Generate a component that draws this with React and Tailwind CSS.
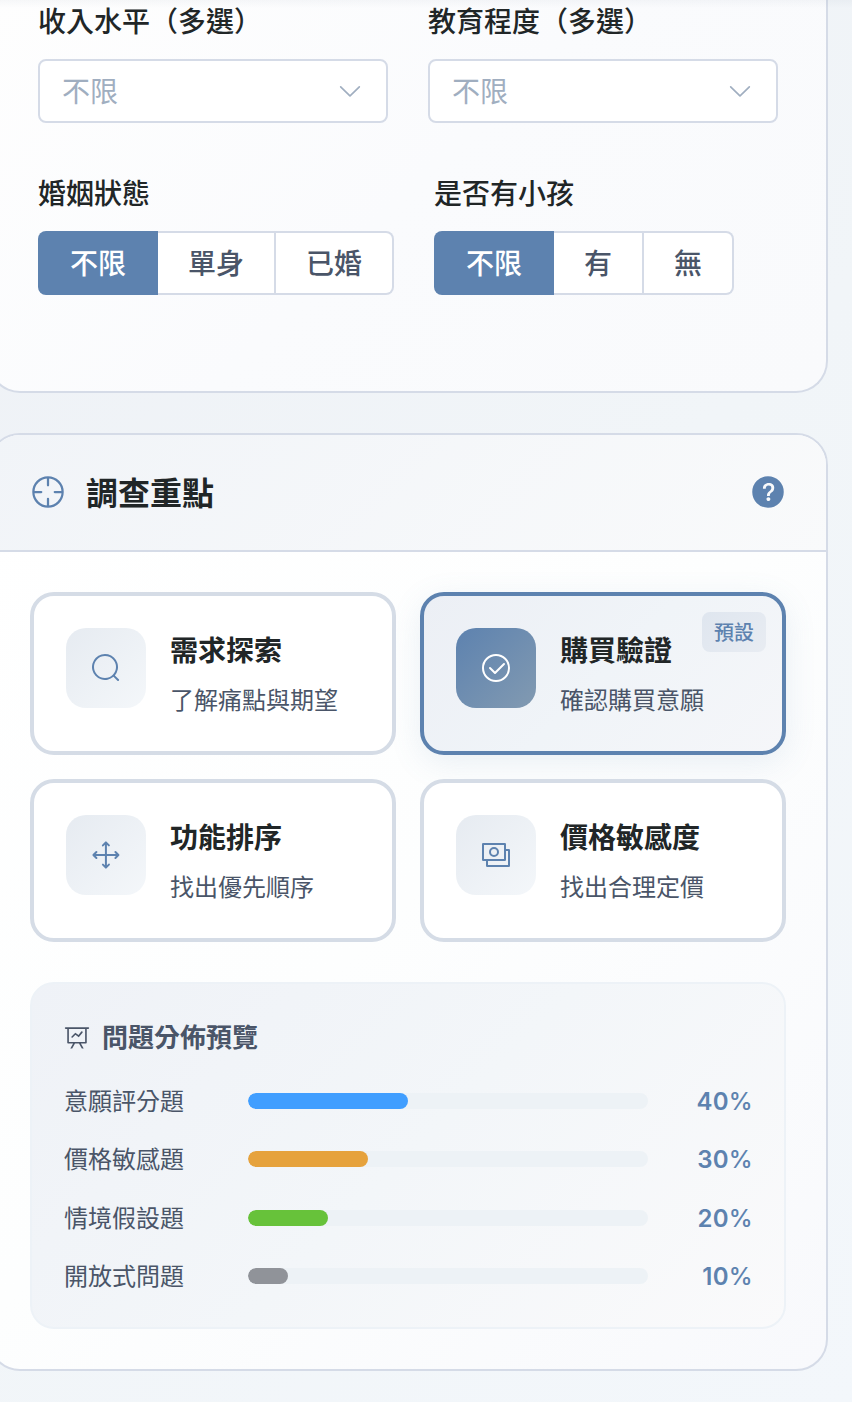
import React from "react";

const ICONS = {
  search: [
    "m795.904 750.72 124.992 124.928a32 32 0 0 1-45.248 45.248L750.656 795.904a416 416 0 1 1 45.248-45.184zM480 832a352 352 0 1 0 0-704 352 352 0 0 0 0 704z",
  ],
  check: [
    "M512 896a384 384 0 1 0 0-768 384 384 0 0 0 0 768zm0 64a448 448 0 1 1 0-896 448 448 0 0 1 0 896z",
    "M745.344 361.344a32 32 0 0 1 45.312 45.312l-288 288a32 32 0 0 1-45.312 0l-160-160a32 32 0 1 1 45.312-45.312L480 626.752l265.344-265.408z",
  ],
  aim: [
    "M512 896a384 384 0 1 0 0-768 384 384 0 0 0 0 768zm0 64a448 448 0 1 1 0-896 448 448 0 0 1 0 896z",
    "M512 96a32 32 0 0 1 32 32v192a32 32 0 0 1-64 0V128a32 32 0 0 1 32-32zm0 576a32 32 0 0 1 32 32v192a32 32 0 1 1-64 0V704a32 32 0 0 1 32-32zM96 512a32 32 0 0 1 32-32h192a32 32 0 0 1 0 64H128a32 32 0 0 1-32-32zm576 0a32 32 0 0 1 32-32h192a32 32 0 1 1 0 64H704a32 32 0 0 1-32-32z",
  ],
  question: [
    "M512 64a448 448 0 1 1 0 896 448 448 0 0 1 0-896zm23.744 191.488c-52.096 0-92.928 14.784-123.2 44.352-30.976 29.568-45.76 70.4-45.76 122.496h80.256c0-29.568 5.632-52.8 17.6-68.992 13.376-19.712 35.2-28.864 66.176-28.864 23.936 0 42.944 6.336 56.32 19.712 12.672 13.376 19.712 31.68 19.712 54.912 0 17.6-6.336 34.496-19.008 49.984l-8.448 9.856c-45.76 40.832-73.216 70.4-82.368 89.408-9.856 19.008-14.08 42.24-14.08 68.992v9.856h80.96v-9.856c0-16.896 3.52-31.68 10.56-45.76 6.336-12.672 15.488-24.64 28.16-35.2 33.792-29.568 54.208-48.576 60.544-55.616 16.896-22.528 26.048-51.392 26.048-86.592 0-42.944-14.08-76.736-42.24-101.376-28.16-25.344-65.472-37.312-111.232-37.312zm-12.672 406.208a54.272 54.272 0 0 0-38.72 14.784 49.408 49.408 0 0 0-15.488 38.016c0 15.488 4.928 28.16 15.488 38.016A54.848 54.848 0 0 0 523.072 768c15.488 0 28.16-4.928 38.72-14.784a51.52 51.52 0 0 0 16.192-38.72 51.968 51.968 0 0 0-15.488-38.016 55.936 55.936 0 0 0-39.424-14.784z",
  ],
  rank: [
    "m186.496 544 41.408 41.344a32 32 0 1 1-45.248 45.312l-96-96a32 32 0 0 1 0-45.312l96-96a32 32 0 1 1 45.248 45.312L186.496 480h290.816V186.432l-41.472 41.472a32 32 0 1 1-45.248-45.184l96-96.128a32 32 0 0 1 45.312 0l96 96.064a32 32 0 0 1-45.248 45.184l-41.344-41.28V480H832l-41.344-41.344a32 32 0 0 1 45.248-45.312l96 96a32 32 0 0 1 0 45.312l-96 96a32 32 0 0 1-45.248-45.312L832 544H541.312v293.44l41.344-41.28a32 32 0 1 1 45.248 45.248l-96 96a32 32 0 0 1-45.312 0l-96-96a32 32 0 1 1 45.312-45.248l41.408 41.408V544H186.496z",
  ],
  money: [
    "M256 640v192h640V384H768v-64h150.976c14.272 0 19.456 1.472 24.64 4.288a29.056 29.056 0 0 1 12.16 12.096c2.752 5.184 4.224 10.368 4.224 24.64v493.952c0 14.272-1.472 19.456-4.288 24.64a29.056 29.056 0 0 1-12.096 12.16c-5.184 2.752-10.368 4.224-24.64 4.224H233.024c-14.272 0-19.456-1.472-24.64-4.288a29.056 29.056 0 0 1-12.16-12.096c-2.688-5.184-4.224-10.368-4.224-24.576V640h64z",
    "M768 192H128v448h640V192zm64-22.976v493.952c0 14.272-1.472 19.456-4.288 24.64a29.056 29.056 0 0 1-12.096 12.16c-5.184 2.752-10.368 4.224-24.64 4.224H105.024c-14.272 0-19.456-1.472-24.64-4.288a29.056 29.056 0 0 1-12.16-12.096C65.536 682.432 64 677.248 64 663.04V169.024c0-14.272 1.472-19.456 4.288-24.64a29.056 29.056 0 0 1 12.096-12.16C85.568 129.536 90.752 128 104.96 128h685.952c14.272 0 19.456 1.472 24.64 4.288a29.056 29.056 0 0 1 12.16 12.096c2.752 5.184 4.224 10.368 4.224 24.64z",
    "M448 576a160 160 0 1 1 0-320 160 160 0 0 1 0 320zm0-64a96 96 0 1 0 0-192 96 96 0 0 0 0 192z",
  ],
  dataLine: [
    "M359.168 768H160a32 32 0 0 1-32-32V192H64a32 32 0 0 1 0-64h896a32 32 0 1 1 0 64h-64v544a32 32 0 0 1-32 32H665.216l110.848 192h-73.856L591.36 768H433.024L322.176 960H248.32l110.848-192zM832 192H192v512h640V192zM342.656 534.656a32 32 0 1 1-45.312-45.312L444.992 341.76l125.44 94.08L679.04 300.032a32 32 0 1 1 49.92 39.936L581.632 524.224 451.008 426.24 342.656 534.592z",
  ],
  arrowDown: [
    "M831.872 340.864 512 652.672 192.128 340.864a30.592 30.592 0 0 0-42.752 0 29.12 29.12 0 0 0 0 41.6L489.664 714.24a32 32 0 0 0 44.672 0l340.288-331.712a29.12 29.12 0 0 0 0-41.728 30.592 30.592 0 0 0-42.752 0z",
  ],
};

function Icon({ name, className }) {
  return (
    <svg viewBox="0 0 1024 1024" fill="currentColor" className={className} aria-hidden="true">
      {ICONS[name].map((d) => (
        <path key={d} d={d} />
      ))}
    </svg>
  );
}

function SelectField({ label }) {
  return (
    <div className="w-[350px]">
      <div className="text-[28px] font-medium leading-[46px] text-[#212627]">{label}</div>
      <div className="mt-3.5 flex h-16 items-center justify-between rounded-lg border-2 border-[#d5dbe7] bg-white px-[22px]">
        <span className="pt-0.5 text-[28px] leading-[44px] text-[#a0aec0]">不限</span>
        <Icon name="arrowDown" className="size-7 text-[#a0aec0]" />
      </div>
    </div>
  );
}

function RadioGroup({ label, options }) {
  return (
    <div>
      <div className="text-[28px] font-medium leading-[46px] text-[#212627]">{label}</div>
      <div className="mt-3.5 flex h-16">
        {options.map((o, i) => (
          <button
            key={o}
            className={
              i === 0
                ? "h-16 w-[120px] rounded-l-lg bg-[#5d82af] pt-0.5 text-[28px] font-medium text-white"
                : "h-16 border-y-2 border-r-2 border-[#d5dbe7] bg-white px-[30px] pt-0.5 text-[28px] font-medium text-[#4a5568] last:rounded-r-lg"
            }
          >
            {o}
          </button>
        ))}
      </div>
    </div>
  );
}

function FocusCard({ icon, title, desc, selected }) {
  return (
    <div
      className={
        selected
          ? "relative flex h-[163px] items-start gap-6 rounded-3xl border-4 border-[#5d82af] bg-linear-135 from-[#eceff5] via-[#f0f4f8] to-[#f5f6f9] p-8 shadow-[0_8px_32px_rgba(93,130,175,0.12)]"
          : "relative flex h-[163px] items-start gap-6 rounded-3xl border-4 border-[#d5dce6] bg-white p-8"
      }
    >
      <div
        className={
          selected
            ? "flex size-20 shrink-0 items-center justify-center rounded-[20px] bg-linear-135 from-[#5d82af] to-[#829ab1] text-white"
            : "flex size-20 shrink-0 items-center justify-center rounded-[20px] bg-linear-135 from-[#e6ebf1] to-[#f4f7fa] text-[#5d82af]"
        }
      >
        <Icon name={icon} className="size-8" />
      </div>
      <div className="pt-px">
        <div className="text-[28px] font-semibold leading-[1.6] text-[#212627]">{title}</div>
        <div className="mt-2 text-[24px] leading-[1.6] text-[#4a5568]">{desc}</div>
      </div>
      {selected && (
        <span className="absolute top-4 right-4 flex h-10 w-16 items-center justify-center rounded-lg bg-linear-135 from-[#dfe6ef] to-[#e8ecf2] pt-0.5 text-[20px] font-medium text-[#5d82af]">
          預設
        </span>
      )}
    </div>
  );
}

const CARDS = [
  { icon: "search", title: "需求探索", desc: "了解痛點與期望" },
  { icon: "check", title: "購買驗證", desc: "確認購買意願", selected: true },
  { icon: "rank", title: "功能排序", desc: "找出優先順序" },
  { icon: "money", title: "價格敏感度", desc: "找出合理定價" },
];

const ROWS = [
  { label: "意願評分題", value: 40, color: "bg-[#409eff]" },
  { label: "價格敏感題", value: 30, color: "bg-[#e6a23c]" },
  { label: "情境假設題", value: 20, color: "bg-[#67c23a]" },
  { label: "開放式問題", value: 10, color: "bg-[#909399]" },
];

export default function App() {
  return (
    <div className="relative h-[1402px] w-[852px] overflow-hidden bg-linear-135 from-[#eef1f6] via-[#f1f5f8] to-[#f3f7fb] font-['Inter','Noto_Sans_CJK_TC',sans-serif]">
      <div className="-ml-3 flex w-[840px] flex-col gap-10">
        <section className="h-[393px] rounded-b-[32px] border-2 border-t-0 border-[#d5dbe7] bg-linear-135 from-[#fefefe] via-[#fafbfd] to-[#f9fafc] px-12">
          <div className="-mt-px flex gap-10">
            <SelectField label="收入水平（多選）" />
            <SelectField label="教育程度（多選）" />
          </div>
          <div className="mt-12 flex gap-10">
            <RadioGroup label="婚姻狀態" options={["不限", "單身", "已婚"]} />
            <RadioGroup label="是否有小孩" options={["不限", "有", "無"]} />
          </div>
        </section>

        <section className="overflow-hidden rounded-[32px] border-2 border-[#d5dbe7] bg-linear-135 from-[#ffffff] via-[#fdfefe] to-[#f8f9fc]">
          <header className="flex h-[117px] items-center gap-5 border-b-2 border-[#d5dbe7] bg-linear-135 from-[#f1f4f8] to-[#f9fafb] px-10">
            <Icon name="aim" className="mb-0.5 size-9 text-[#5d82af]" />
            <h2 className="pt-0.5 text-[32px] font-semibold leading-[1.6] text-[#212627]">調查重點</h2>
            <Icon name="question" className="mb-0.5 ml-auto size-9 text-[#5d82af]" />
          </header>
          <div className="p-10">
            <div className="grid grid-cols-2 gap-6">
              {CARDS.map((c) => (
                <FocusCard key={c.title} {...c} />
              ))}
            </div>

            <div className="mt-10 rounded-3xl border-2 border-[#edf2f7] bg-linear-135 from-[#eff2f7] via-[#f3f6f9] to-[#fafafb] p-8">
              <div className="mb-6 flex items-center gap-3 text-[#4a5568]">
                <Icon name="dataLine" className="size-[26px]" />
                <h3 className="-mb-px pt-px text-[26px] font-semibold leading-[1.6]">問題分佈預覽</h3>
              </div>
              <div className="flex flex-col gap-5">
                {ROWS.map((r) => (
                  <div key={r.label} className="flex h-[38.4px] items-center gap-6 text-[24px] leading-[1.6]">
                    <span className="w-40 pt-[2.4px] text-[#4a5568]">{r.label}</span>
                    <div className="h-4 flex-1 overflow-hidden rounded-full bg-[#edf2f6]">
                      <div className={`h-full rounded-full ${r.color}`} style={{ width: `${r.value}%` }} />
                    </div>
                    <span className="-mr-0.5 w-[82px] pt-[2.4px] pr-px text-right font-semibold tracking-[0.3px] text-[#5d82af]">
                      {r.value}
                      <span className="font-medium">%</span>
                    </span>
                  </div>
                ))}
              </div>
            </div>
          </div>
        </section>
      </div>
      <div className="pointer-events-none absolute inset-x-0 top-0 h-2 bg-linear-to-b from-slate-500/5 to-transparent" />
    </div>
  );
}
